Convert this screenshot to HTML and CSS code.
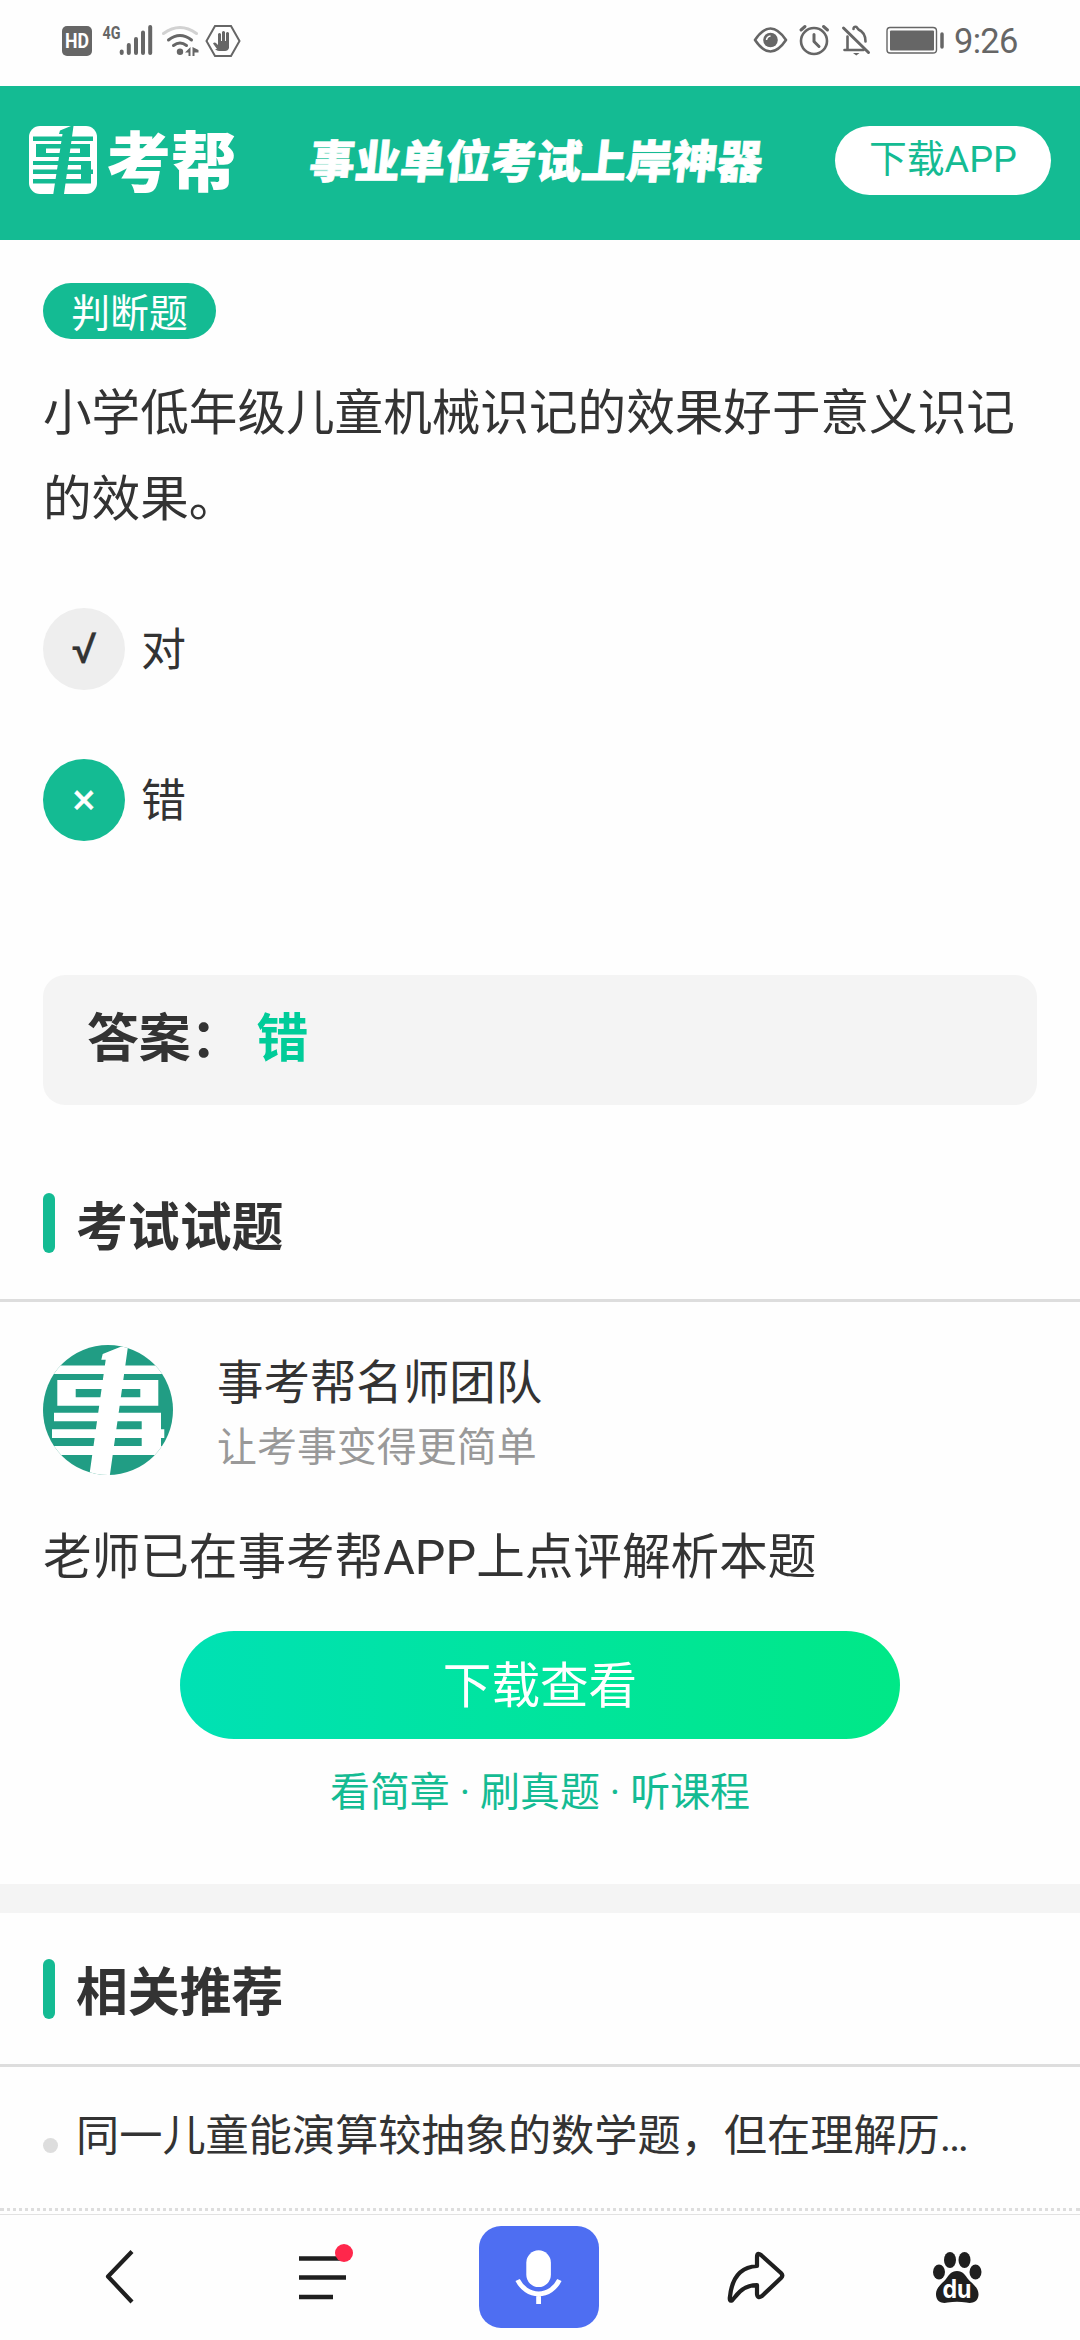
FILE: index.html
```html
<!DOCTYPE html>
<html lang="zh-CN">
<head>
<meta charset="utf-8">
<title>事考帮</title>
<link rel="stylesheet" href="styles.css">
</head>
<body>
<div class="status">
  <svg class="status-left" width="190" height="40" viewBox="56 20 190 40">
    <g fill="#666">
      <rect x="62" y="26" width="30" height="30" rx="5"/>
      <text x="77" y="48" class="hd" text-anchor="middle" textLength="24" lengthAdjust="spacingAndGlyphs">HD</text>
      <text x="102.500" y="38.500" class="g4" textLength="18" lengthAdjust="spacingAndGlyphs">4G</text>
      <g stroke="#666" stroke-width="4" stroke-linecap="round">
        <path d="M121.700 51.500v1.500M128.800 45v8M136 39v14M143 32.500v20.500M150.200 27v26"/>
      </g>
      <circle cx="180" cy="51.700" r="3.200"/>
      <path d="M190.500 47v9h-2v-3.500h-3.500zM192.500 47v9h2v-3.500h4v-2.500z"/>
      <path d="M217 49 213 43.500q1.500-2 3.500 0l1.500 1.500V34q1.500-2 3 0v7h1V32q1.500-2 3 0v9h1v-8q1.500-2 3 0v15q-1 3-4 3h-6q-2 0-4-2z"/>
    </g>
    <g fill="none" stroke="#666" stroke-width="3" stroke-linecap="round">
      <path stroke="#d2d2d2" d="M163.500 33.500q16.500-12 33 0"/>
      <path d="M168.500 40q11.500-9 23 0M173.500 45.500q6.500-5 13 0"/>
      <path stroke-width="2" d="M215 26h16l8.500 15-8.500 15h-16l-8.500-15z"/>
    </g>
  </svg>
  <svg class="status-right" width="196" height="40" viewBox="748 20 196 40">
    <g fill="none" stroke="#666" stroke-width="2.600" stroke-linecap="round" stroke-linejoin="round">
      <path d="M755 40q15.500-23 31 0-15.500 23-31 0z"/>
      <circle cx="814" cy="41" r="13"/>
      <path stroke-width="3" d="M814 34.500v7l5 5M801 30l4-3.500M827.500 30l-4-3.500M843.500 28l25 24.500"/>
      <path d="M844.500 50h19M847.500 49V36.500M853.500 29q0-3 3-2l2 2.500q7 3 7 12"/>
      <path stroke-width="1.400" d="M890 27.500h43q3.500 0 3.500 3.500v19q0 3-3.500 3h-43q-3 0-3-3V31q0-3.500 3-3.500z"/>
      <path stroke-width="3.500" d="M942 34v13"/>
    </g>
    <g fill="#666">
      <circle cx="770.500" cy="40" r="7.300"/>
      <rect x="890" y="30.500" width="44" height="20" rx="1"/>
      <path d="M853 53h6.500l-3.200 2.500z"/>
      <path d="M766.500 40q.5-3.500 4-4" fill="none" stroke="#fff" stroke-width="1.500"/>
    </g>
  </svg>
  <span class="time">9:26</span>
</div>

<header class="header">
  <svg class="logo" width="68" height="68" viewBox="0 0 68 68">
    <rect width="68" height="68" rx="11" fill="#fff"/>
    <g fill="#14bb93">
      <path d="M4 10.500h60V15H4zM7 18h54v13H7zM4 35h58v4H4zM4 43.500h60v4.500H4zM4 53h58v4.500H4zM52 35h10v22H52z"/>
      <path d="M17 22.500h34V27H17z" fill="#fff"/>
      <path d="M44.500 0H42L31 4.500 30 8h3.500L24.300 68H35z"/>
    </g>
  </svg>
  <span class="brand">考帮</span>
  <span class="slogan">事业单位考试上岸神器</span>
  <a class="app-btn">下载APP</a>
</header>

<main>
  <section class="question">
    <span class="tag">判断题</span>
    <p class="stem">小学低年级儿童机械识记的效果好于意义识记的效果。</p>
    <div class="option"><span class="mark">√</span><span class="option-text">对</span></div>
    <div class="option"><span class="mark mark-on">×</span><span class="option-text">错</span></div>
    <div class="answer">答案：<span class="answer-value">错</span></div>
  </section>

  <section class="exam">
    <h2 class="title">考试试题</h2>
    <div class="team">
      <svg width="130" height="130" viewBox="0 0 130 130">
        <defs><clipPath id="disc"><circle cx="65" cy="65" r="65"/></clipPath></defs>
        <g clip-path="url(#disc)">
          <rect width="130" height="130" fill="#219d84"/>
          <g fill="#fff">
            <path d="M0 20.500h130V29H0zM14.300 35h101v25.700h-101zM11 67.700h107v8.600H11zM9 84.300h112.300V93H9zM0 101h130v9H0zM98.700 67.700H118V110H98.700z"/>
            <path d="M32.700 44h64.600v8.300H32.700z" fill="#219d84"/>
            <path d="M85.200 0 77.700 1.700 59.700 9l-1.400 5.700h4.400L46.400 130h20.500z"/>
          </g>
        </g>
      </svg>
      <div class="team-text">
        <div class="team-name">事考帮名师团队</div>
        <div class="team-sub">让考事变得更简单</div>
      </div>
    </div>
    <p class="notice">老师已在事考帮APP上点评解析本题</p>
    <a class="view-btn">下载查看</a>
    <p class="links">看简章 · 刷真题 · 听课程</p>
  </section>

  <section class="related">
    <h2 class="title">相关推荐</h2>
    <div class="related-row"><i class="dot"></i><span class="related-text">同一儿童能演算较抽象的数学题，但在理解历<span class="more">…</span></span></div>
  </section>
</main>

<nav class="toolbar">
  <svg width="216" height="125" viewBox="0 2215 216 125"><path d="M132 2251.500 108 2276.500 132 2302" fill="none" stroke="#1f1f1f" stroke-width="4.200" stroke-linejoin="round"/></svg>
  <svg width="216" height="125" viewBox="216 2215 216 125"><path d="M299 2258.500h41M299 2277.500h47M299 2297h34" stroke="#1f1f1f" stroke-width="4.400"/><circle cx="344" cy="2253" r="9" fill="#ff274b"/></svg>
  <svg width="216" height="125" viewBox="432 2215 216 125"><rect x="479" y="2226" width="120" height="102" rx="22" fill="#4e6ef2"/><rect x="526.300" y="2250.300" width="24.600" height="36.700" rx="12.300" fill="#fff"/><path d="M517.600 2280c4 8 12 13.800 21 13.800s17-5.800 20.800-13.800M538.600 2294v10" fill="none" stroke="#fff" stroke-width="4.800"/></svg>
  <svg width="216" height="125" viewBox="648 2215 216 125"><path d="M757 2266v-9q0-5 4-2l20 18q2.500 2.500 0 5l-19 18q-4.500 3-5-2v-9q-13 0-22 12l-3 3.500q-3 1-2-4 3-29 27-30.500z" fill="none" stroke="#1f1f1f" stroke-width="4.200" stroke-linejoin="round"/></svg>
  <svg width="216" height="125" viewBox="864 2215 216 125"><g fill="#1f1f1f"><ellipse cx="939" cy="2272" rx="6" ry="7.500"/><ellipse cx="950" cy="2260" rx="6" ry="8"/><ellipse cx="964.500" cy="2260" rx="6" ry="8"/><ellipse cx="975.500" cy="2272" rx="6" ry="7.500"/><path d="M957 2271c6 0 8 4 11 8s11 8 10.500 16-8 8.500-12 7.500q-9.500-1.500-19 0c-4 1-11 .5-11.500-7.500s7-12 10-16 5-8 11-8z"/></g><text x="957" y="2298" class="du" text-anchor="middle" textLength="29" lengthAdjust="spacingAndGlyphs">du</text></svg>
</nav>
</body>
</html>
```
FILE: styles.css
```css
* { box-sizing: border-box; }
body {
  margin: 0;
  width: 1080px;
  height: 2340px;
  overflow: hidden;
  display: flex;
  flex-direction: column;
  background: #fefefe;
  color: #333;
  font-family: "Noto Sans CJK SC", sans-serif;
}
p, h2 { margin: 0; font-weight: 400; }
svg { display: block; flex: none; }

.status {
  flex: none;
  height: 86px;
  padding: 20px 62px 0 56px;
  display: flex;
}
.status-right { margin-left: auto; }
.time {
  width: 64px;
  margin-left: 10px;
  font: 34.5px/42px Roboto, sans-serif;
  letter-spacing: -0.7px;
  color: #666;
  white-space: nowrap;
}
.hd { font: bold 20px Roboto, sans-serif; fill: #fff; }
.g4 { font: bold 19px Roboto, sans-serif; }

.header {
  flex: none;
  height: 154px;
  padding: 0 29px 6px;
  display: flex;
  align-items: center;
  background: #14bb93;
  color: #fff;
  white-space: nowrap;
}
.brand {
  width: 132px;
  margin-left: 9px;
  font-size: 65px;
  line-height: 68px;
  font-weight: 900;
  padding-bottom: 4px;
}
.slogan {
  width: 452px;
  margin-left: 72px;
  padding-bottom: 4px;
  font-size: 45.3px;
  line-height: 68px;
  font-weight: 900;
  -webkit-text-stroke: 0.7px #fff;
  transform: skewX(-6deg);
}
.app-btn {
  width: 216px;
  height: 69px;
  margin-left: auto;
  border-radius: 35px;
  background: #fff;
  color: #14bb93;
  font-family: Roboto, "Noto Sans CJK SC", sans-serif;
  font-size: 37.8px;
  line-height: 66px;
  text-align: center;
}

main { flex: 1; min-height: 0; overflow: hidden; }
.question { padding: 43px 43px 0; height: 913px; display: flex; flex-direction: column; }
.tag {
  flex: none;
  width: 173px;
  height: 56px;
  border-radius: 28px;
  background: #14bb93;
  color: #fff;
  font-size: 38.88px;
  line-height: 54px;
  text-align: center;
}
.stem { margin-top: 28px; font-size: 48.6px; line-height: 85.5px; }
.option {
  display: flex;
  align-items: center;
  gap: 16px;
  height: 82px;
  margin-top: 69px;
  font-size: 45px;
}
.option-text { padding-bottom: 5px; }
.stem + .option { margin-top: 70px; }
.mark {
  width: 82px;
  height: 82px;
  border-radius: 50%;
  background: #eee;
  font-family: Roboto, sans-serif;
  font-size: 43px;
  line-height: 81px;
  font-weight: 400;
  -webkit-text-stroke: 0.3px currentColor;
  text-align: center;
}
.mark-on { background: #14bb93; color: #fff; }
.answer {
  height: 130px;
  margin-top: 134px;
  padding-left: 44px;
  border-radius: 22px;
  background: #f4f4f4;
  font-size: 51.84px;
  font-weight: 700;
  line-height: 120px;
}
.answer-value { margin-left: 14px; color: #0c9; }

.title {
  height: 149px;
  padding: 0 43px;
  border-bottom: 3px solid #ddd;
  display: flex;
  align-items: center;
  gap: 21px;
  font-size: 51.84px;
  font-weight: 700;
}
.title::before { content: ""; width: 12px; height: 60px; border-radius: 6px; background: #14bb93; }
.exam { height: 731px; }
.exam .title { padding-bottom: 6px; }
.team { display: flex; padding: 43px 43px 0; gap: 44px; }
.team-text { margin-top: -1px; }
.team-name { font-size: 46.44px; line-height: 70px; }
.team-sub { font-size: 39.96px; line-height: 60px; color: #999; }
.notice { margin: 40px 43px 0; font-family: Roboto, "Noto Sans CJK SC", sans-serif; font-size: 48.6px; line-height: 85px; }
.view-btn {
  display: block;
  width: 720px;
  height: 108px;
  margin: 31px auto 0;
  border-radius: 54px;
  background: linear-gradient(90deg, #00e1b4, #00e887);
  color: #fff;
  font-size: 48.6px;
  line-height: 102px;
  text-align: center;
}
.links { margin-top: 24px; color: #14bb93; font-family: Roboto, "Noto Sans CJK SC", sans-serif; font-size: 39.96px; line-height: 60px; text-align: center; }
.related { border-top: 29px solid #f4f4f4; }
.related .title { height: 154px; }
.related-row {
  height: 144px;
  padding: 0 43px;
  border-bottom: 3px dotted #ddd;
  display: flex;
  align-items: center;
  gap: 18px;
  font-size: 43.2px;
  white-space: nowrap;
}
.related-text { padding-bottom: 11px; }
.more { font-family: Roboto, sans-serif; }
.dot { width: 15px; height: 15px; margin-top: 16px; border-radius: 50%; background: #ddd; }
.toolbar { flex: none; height: 126px; border-top: 1px solid #e2e2e2; display: flex; }
.du { font: bold 25px Inter, sans-serif; fill: #fff; stroke: #1f1f1f; stroke-width: 2.5px; paint-order: stroke; }
```
